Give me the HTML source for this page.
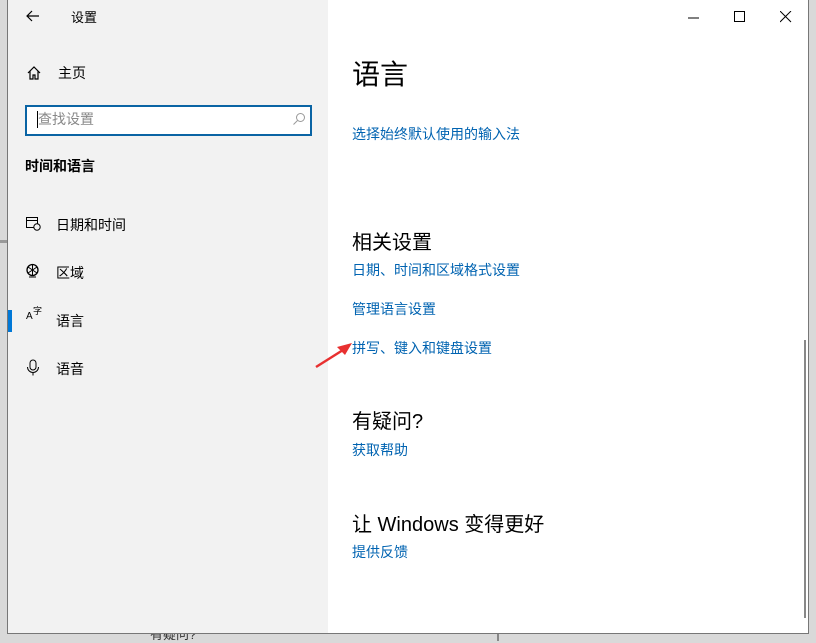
<!DOCTYPE html>
<html><head><meta charset="utf-8"><style>
*{margin:0;padding:0;box-sizing:border-box}
body{width:816px;height:641px;background:#d9d9d9;position:relative;overflow:hidden;font-family:"Liberation Sans","Noto Sans CJK SC",sans-serif}
.win{position:absolute;left:7px;top:0;width:802px;height:634px;background:#fff;border:1px solid #777;border-top:none}
.side{position:absolute;left:0;top:0;width:320px;height:633px;background:#f2f2f2}
.t{position:absolute;font-size:14px;color:#000;white-space:nowrap}
.lk{position:absolute;font-size:14px;color:#0063b1;white-space:nowrap}
.h{position:absolute;font-size:20px;color:#000;white-space:nowrap}
svg{position:absolute}
</style></head><body>
<div style="position:absolute;left:0;top:240px;width:7px;height:3px;background:#999"></div>
<div style="position:absolute;left:150px;top:624px;font-size:13px;color:#333">有疑问?</div>
<div style="position:absolute;left:497px;top:634px;width:2px;height:7px;background:#888"></div>
<div class="win">
<div class="side"></div>
<svg style="left:18px;top:9px" width="14" height="14" viewBox="0 0 14 14"><path d="M13 7H1M6 2L1 7l5 5" stroke="#000" fill="none" stroke-width="1.2"/></svg>
<div class="t" style="left:63px;top:7px;font-size:13px">设置</div>
<svg style="left:18px;top:65px" width="16" height="16" viewBox="0 0 16 16"><path d="M2 8L8 2l6 6M4 6v8h3v-4h2v4h3V6" stroke="#000" fill="none" stroke-width="1.2"/></svg>
<div class="t" style="left:50px;top:63px">主页</div>
<div style="position:absolute;left:17px;top:105px;width:287px;height:31px;border:2px solid #0a64a4;background:#fff"></div>
<div style="position:absolute;left:29px;top:111px;width:1px;height:17px;background:#000"></div>
<div class="t" style="left:30px;top:109px;color:#888">查找设置</div>
<svg style="left:284px;top:112px" width="14" height="14" viewBox="0 0 14 14"><circle cx="8.5" cy="5.5" r="4" stroke="#999" fill="none"/><path d="M5.5 8.5L1.5 12.5" stroke="#999"/></svg>
<div class="t" style="left:17px;top:156px;font-weight:bold">时间和语言</div>
<svg style="left:17px;top:215px" width="16" height="16" viewBox="0 0 16 16"><rect x="1.5" y="2.5" width="11" height="10" stroke="#000" fill="none"/><path d="M1.5 5.5h11" stroke="#000"/><circle cx="12" cy="12" r="3.2" fill="#f2f2f2" stroke="#000"/></svg>
<div class="t" style="left:48px;top:215px">日期和时间</div>
<svg style="left:17px;top:263px" width="16" height="16" viewBox="0 0 16 16"><circle cx="7.5" cy="7" r="5.5" stroke="#000" fill="none" stroke-width="1.3"/><path d="M3 4l9 6M3 10l9-6M7.5 1.5v11M4 14h7" stroke="#000" fill="none"/></svg>
<div class="t" style="left:48px;top:263px">区域</div>
<div style="position:absolute;left:0;top:310px;width:4px;height:22px;background:#0078d7"></div>
<div class="t" style="left:18px;top:311px;font-size:10px">A</div>
<div class="t" style="left:25px;top:304px;font-size:9px">字</div>
<div class="t" style="left:48px;top:311px">语言</div>
<svg style="left:17px;top:359px" width="16" height="18" viewBox="0 0 16 18"><rect x="5" y="1" width="6" height="10" rx="3" stroke="#000" fill="none"/><path d="M2.5 8a5.5 5.5 0 0 0 11 0M8 13.5v3" stroke="#000" fill="none"/></svg>
<div class="t" style="left:48px;top:359px">语音</div>
<svg style="left:680px;top:12px" width="12" height="12"><path d="M0 6h11" stroke="#000"/></svg>
<svg style="left:726px;top:11px" width="12" height="12"><rect x="0.5" y="0.5" width="10" height="10" stroke="#000" fill="none"/></svg>
<svg style="left:772px;top:11px" width="12" height="12"><path d="M0 0l11 11M11 0L0 11" stroke="#000"/></svg>
<div class="h" style="left:344px;top:53px;font-size:28px">语言</div>
<div class="lk" style="left:344px;top:124px">选择始终默认使用的输入法</div>
<div class="h" style="left:344px;top:226px">相关设置</div>
<div class="lk" style="left:344px;top:260px">日期、时间和区域格式设置</div>
<div class="lk" style="left:344px;top:299px">管理语言设置</div>
<div class="lk" style="left:344px;top:338px">拼写、键入和键盘设置</div>
<svg style="left:305px;top:340px" width="40" height="30" viewBox="0 0 40 30"><path d="M3 27L30 10" stroke="#e83030" stroke-width="2.5"/><path d="M39 3L24 7l8 8z" fill="#e83030"/></svg>
<div class="h" style="left:344px;top:405px">有疑问?</div>
<div class="lk" style="left:344px;top:440px">获取帮助</div>
<div class="h" style="left:344px;top:508px">让 Windows 变得更好</div>
<div class="lk" style="left:344px;top:542px">提供反馈</div>
<div style="position:absolute;left:796px;top:340px;width:2px;height:278px;background:#888"></div>
</div>
</body></html>
